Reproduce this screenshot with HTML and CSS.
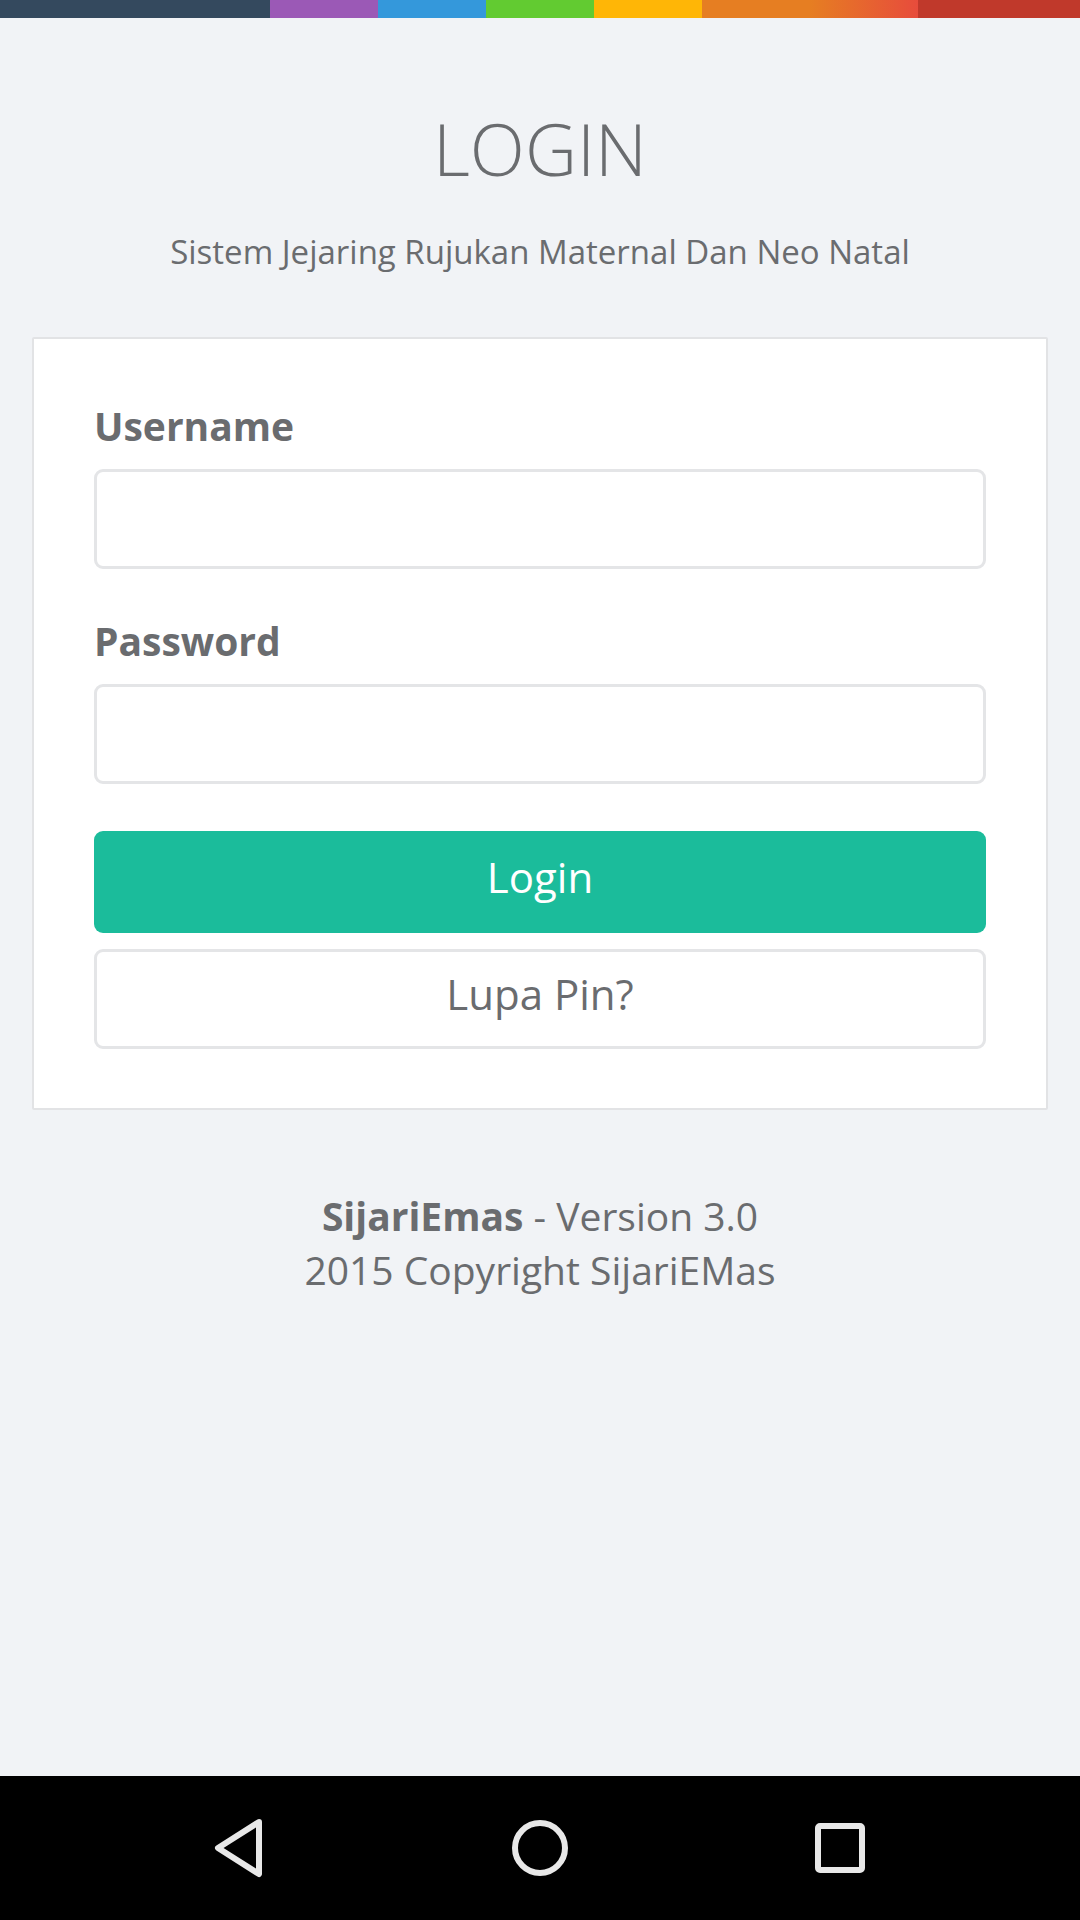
FILE: index.html
```html
<!DOCTYPE html>
<html lang="id">
<head>
<meta charset="utf-8">
<title>Login - SijariEmas</title>
<link rel="stylesheet" href="styles.css">
</head>
<body>
<div class="screen">
  <div class="color-line"></div>
  <main class="main">
    <header class="header">
      <h3 class="title">LOGIN</h3>
      <small class="subtitle">Sistem Jejaring Rujukan Maternal Dan Neo Natal</small>
    </header>
    <section class="panel">
      <form class="form">
        <label class="label" for="username">Username</label>
        <input class="input" id="username" type="text">
        <label class="label label-pass" for="password">Password</label>
        <input class="input" id="password" type="password">
        <button class="btn btn-login" type="button">Login</button>
        <button class="btn btn-default" type="button">Lupa Pin?</button>
      </form>
    </section>
    <footer class="footer">
      <div class="footer-line"><strong>SijariEmas</strong> - Version 3.0</div>
      <div class="footer-line">2015 Copyright SijariEMas</div>
    </footer>
  </main>
  <nav class="navbar">
    <div class="nav-btn">
      <svg width="60" height="60" viewBox="0 0 60 60"><path d="M49 4 L8 30 L49 56 Z" fill="none" stroke="#e8e8e8" stroke-width="6" stroke-linejoin="round"/></svg>
    </div>
    <div class="nav-btn">
      <svg width="60" height="60" viewBox="0 0 60 60"><circle cx="30" cy="30" r="25" fill="none" stroke="#e8e8e8" stroke-width="6"/></svg>
    </div>
    <div class="nav-btn">
      <svg width="60" height="60" viewBox="0 0 60 60"><rect x="8" y="8" width="44" height="44" rx="2" fill="none" stroke="#e8e8e8" stroke-width="6"/></svg>
    </div>
  </nav>
</div>
</body>
</html>
```
FILE: styles.css
```css
* { box-sizing: border-box; }
html, body {
  margin: 0;
  padding: 0;
  background: #f1f3f6;
}
body {
  font-family: "Open Sans", "Noto Sans", sans-serif;
  color: #6a6c6f;
}
.screen {
  width: 1080px;
  height: 1920px;
  display: flex;
  flex-direction: column;
  overflow: hidden;
}
.color-line {
  height: 18px;
  flex: none;
  background: linear-gradient(to right, #34495e, #34495e 25%, #9b59b6 25%, #9b59b6 35%, #3498db 35%, #3498db 45%, #62cb31 45%, #62cb31 55%, #ffb606 55%, #ffb606 65%, #e67e22 65%, #e67e22 75%, #e74c3c 85%, #e74c3c 85%, #c0392b 85%, #c0392b 100%);
}
.main {
  flex: 1;
  display: flex;
  flex-direction: column;
}
.header {
  display: flex;
  flex-direction: column;
  align-items: center;
  padding-top: 94px;
}
.title {
  margin: 0;
  font-size: 72px;
  line-height: 72px;
  font-weight: 300;
  color: #6a6c6f;
}
.subtitle {
  margin-top: 51px;
  font-size: 33px;
  line-height: 33px;
  color: #6a6c6f;
}
.panel {
  margin: 69px 32px 0;
  background: #fff;
  border: 2px solid #e2e3e5;
  border-radius: 2px;
  padding: 67px 60px 59px;
}
.form {
  display: flex;
  flex-direction: column;
}
.label {
  font-size: 39px;
  line-height: 39px;
  font-weight: 700;
  margin-bottom: 24px;
}
.label-pass {
  margin-top: 52px;
}
.input {
  height: 100px;
  border: 3px solid #e4e5e7;
  border-radius: 9px;
  background: #fff;
  font-family: inherit;
  font-size: 39px;
  padding: 0 30px;
  outline: none;
}
.btn {
  font-family: inherit;
  font-size: 42px;
  font-weight: 400;
  border-radius: 9px;
  cursor: pointer;
  padding: 0;
}
.btn-login {
  margin-top: 47px;
  height: 102px;
  background: #1bbc9b;
  border: none;
  color: #fff;
  padding-bottom: 11px;
}
.btn-default {
  margin-top: 16px;
  height: 100px;
  background: #fff;
  border: 3px solid #e4e5e7;
  color: #6a6c6f;
  padding-bottom: 11px;
}
.footer {
  margin-top: 79px;
  display: flex;
  flex-direction: column;
  align-items: center;
  font-size: 39px;
}
.footer-line {
  line-height: 54px;
}
.navbar {
  flex: none;
  height: 144px;
  background: #000;
  display: flex;
  justify-content: center;
  align-items: center;
  gap: 200px;
}
.nav-btn {
  width: 100px;
  height: 60px;
  display: flex;
  justify-content: center;
  align-items: center;
}
.nav-btn svg { display: block; }
```
